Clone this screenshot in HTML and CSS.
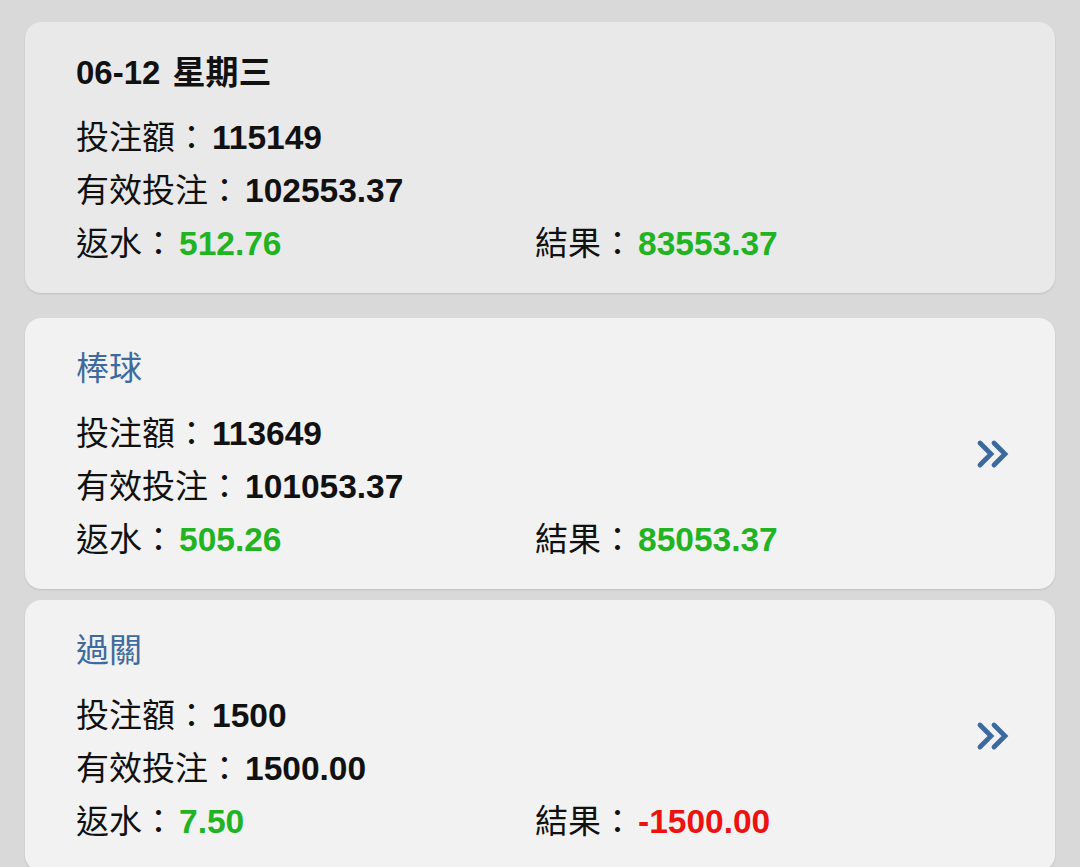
FILE: index.html
```html
<!DOCTYPE html>
<html lang="zh-Hant">
<head>
    <meta charset="UTF-8">
    <meta name="viewport" content="width=device-width, initial-scale=1.0">
    <title>投注報表</title>
    <link rel="stylesheet" href="styles.css">
</head>
<body>
    <div class="list">
        <div class="card summary">
            <div class="card-body">
                <div class="card-title">06-12 星期三</div>
                <div class="row">投注額：<b>115149</b></div>
                <div class="row">有效投注：<b>102553.37</b></div>
                <div class="row split">
                    <div>返水：<b class="win">512.76</b></div>
                    <div>結果：<b class="win">83553.37</b></div>
                </div>
            </div>
        </div>

        <div class="card">
            <div class="card-body">
                <div class="card-title sport">棒球</div>
                <div class="row">投注額：<b>113649</b></div>
                <div class="row">有效投注：<b>101053.37</b></div>
                <div class="row split">
                    <div>返水：<b class="win">505.26</b></div>
                    <div>結果：<b class="win">85053.37</b></div>
                </div>
            </div>
            <div class="more">
                <svg width="34" height="30" viewBox="0 0 34 30">
                    <path d="M4 4 L15 15 L4 26 M18 4 L29 15 L18 26" fill="none" stroke="#3b6a9f" stroke-width="4.8" stroke-linejoin="miter" stroke-linecap="round"/>
                </svg>
            </div>
        </div>

        <div class="card">
            <div class="card-body">
                <div class="card-title sport">過關</div>
                <div class="row">投注額：<b>1500</b></div>
                <div class="row">有效投注：<b>1500.00</b></div>
                <div class="row split">
                    <div>返水：<b class="win">7.50</b></div>
                    <div>結果：<b class="lose">-1500.00</b></div>
                </div>
            </div>
            <div class="more">
                <svg width="34" height="30" viewBox="0 0 34 30">
                    <path d="M4 4 L15 15 L4 26 M18 4 L29 15 L18 26" fill="none" stroke="#3b6a9f" stroke-width="4.8" stroke-linejoin="miter" stroke-linecap="round"/>
                </svg>
            </div>
        </div>
    </div>
</body>
</html>
```

FILE: styles.css
```css
body {
    margin: 0;
    background: #d9d9d9;
    font-family: "Liberation Sans", "Noto Sans CJK TC", sans-serif;
    color: #111;
}
.list {
    padding: 22px 25px 0 25px;
}
.card {
    display: flex;
    align-items: center;
    background: #f2f2f2;
    border-radius: 16px;
    height: 271px;
    box-sizing: border-box;
    margin-bottom: 11px;
    box-shadow: 0 1px 2px rgba(0,0,0,0.12);
}
.card.summary {
    background: #e9e9e9;
    margin-bottom: 25px;
}
.card-body {
    flex: 1;
    padding: 33px 0 22px 51px;
    align-self: flex-start;
}
.card-title {
    font-size: 33px;
    line-height: 36px;
    font-weight: bold;
    word-spacing: 3px;
    margin-bottom: 20px;
}
.card-title.sport {
    font-weight: normal;
    color: #3e6a9d;
}
.row {
    font-size: 33px;
    line-height: 53px;
    white-space: nowrap;
}
.row b {
    font-weight: bold;
    font-size: 33.5px;
    margin-left: 4px;
}
.split {
    display: grid;
    grid-template-columns: 459px 1fr;
}
.win {
    color: #22b322;
}
.lose {
    color: #ee1111;
}
.more {
    width: 45px;
    padding-right: 40px;
    display: flex;
    justify-content: center;
}
```
